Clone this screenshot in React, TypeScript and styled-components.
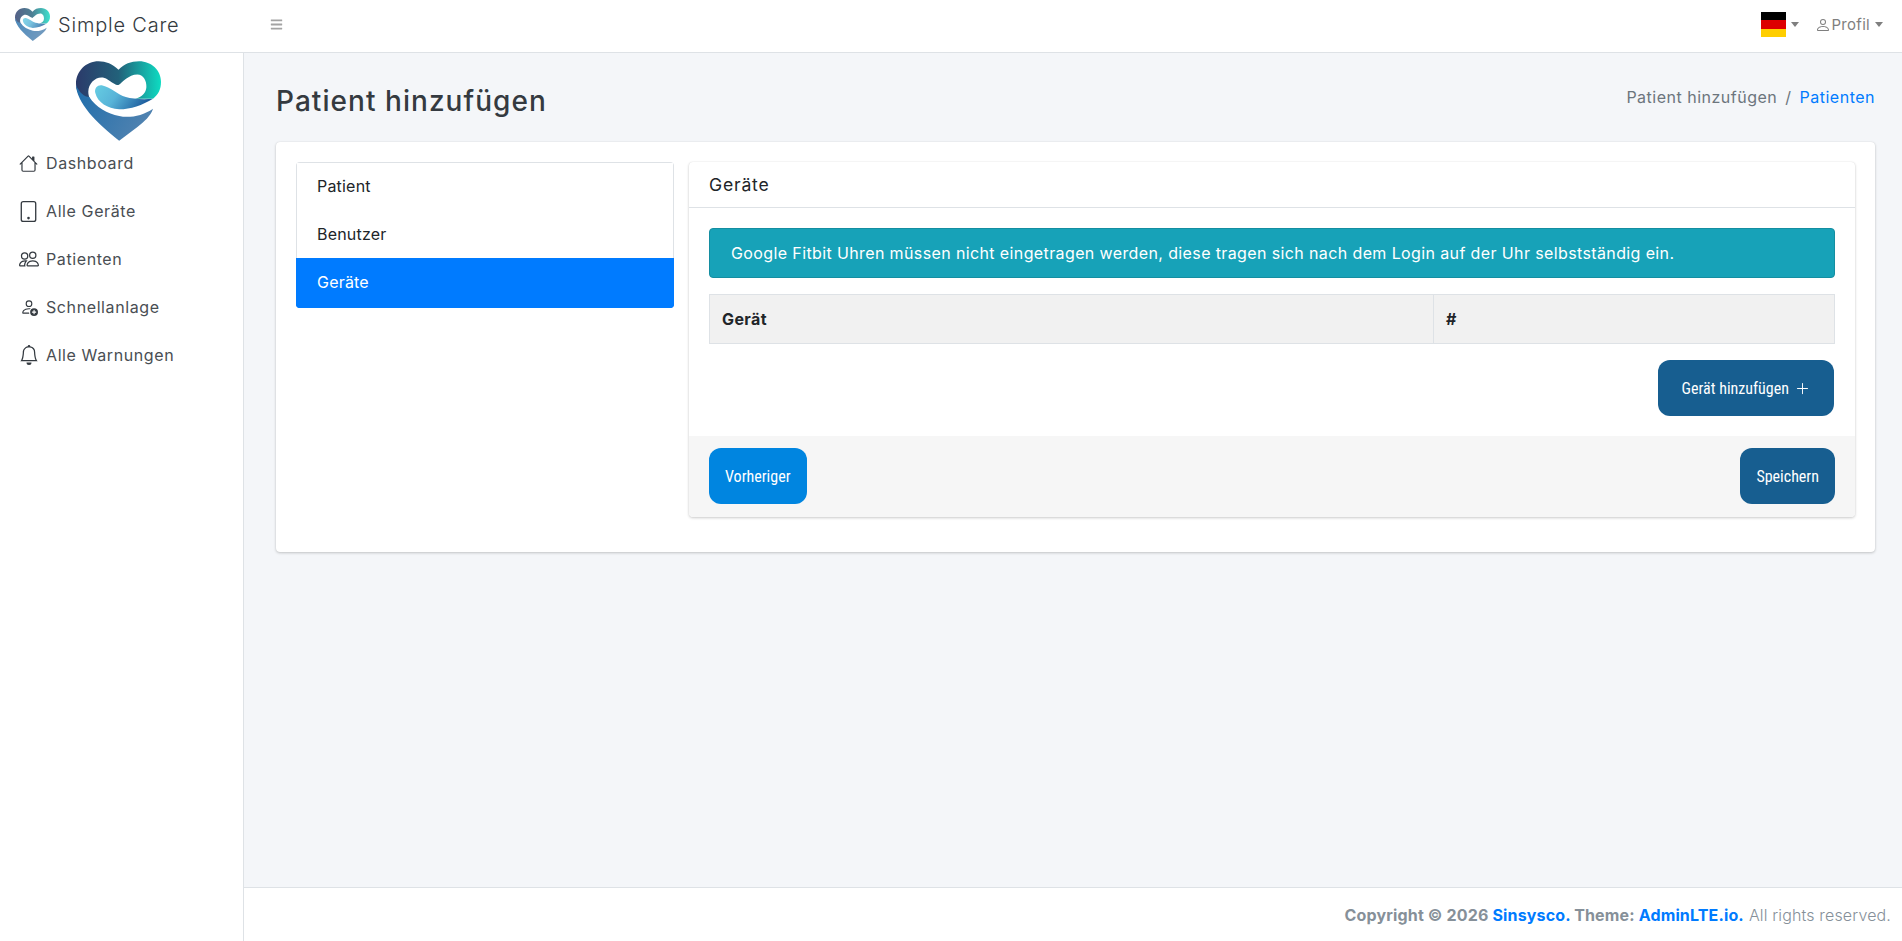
import React from "react";
import styled, { createGlobalStyle } from "styled-components";
import { BsBell, BsHouse, BsPeople, BsPerson, BsPersonAdd, BsPlusLg, BsTablet } from "react-icons/bs";
import { FaBars } from "react-icons/fa";

const GlobalStyle = createGlobalStyle`
  html, body {
    margin: 0;
    padding: 0;
    background: #fff;
    font-family: Inter, "Open Sans", sans-serif;
    font-size: 15px;
    color: #212529;
  }
  * { box-sizing: border-box; }
`;

const S = {
  Page: styled.div`
    display: grid;
    grid-template-columns: 244px 1fr;
    grid-template-rows: 53px 1fr 54px;
    height: 941px;
    overflow: hidden;
  `,
  Navbar: styled.header`
    grid-column: 1 / 3;
    display: flex;
    align-items: center;
    background: #fff;
    border-bottom: 1px solid #dee2e6;
    padding: 0 19px 3px 0;
  `,
  Brand: styled.div`
    display: flex;
    align-items: center;
    gap: 8px;
    width: 270px;
    padding-left: 15px;
    font-size: 20px;
    font-weight: 300;
    color: #343a40;
    letter-spacing: 0.8px;
  `,
  Burger: styled.span`
    display: flex;
    font-size: 13px;
    color: #a3a3a3;
  `,
  NavRight: styled.div`
    display: flex;
    align-items: center;
    margin-left: auto;
    color: #7f7f7f;
    font-size: 15px;
  `,
  Caret: styled.span`
    display: inline-block;
    margin-left: 5px;
    border-top: 5px solid #7f7f7f;
    border-left: 4px solid transparent;
    border-right: 4px solid transparent;
  `,
  Flag: styled.span`
    display: block;
    width: 25px;
    height: 25px;
    background: linear-gradient(#000 33.3%, #dd0000 33.3% 66.6%, #ffce00 66.6%);
  `,
  Profile: styled.div`
    display: flex;
    align-items: center;
    margin-left: 16px;
    letter-spacing: 0.3px;
    svg { font-size: 16px; }
  `,
  Sidebar: styled.aside`
    grid-row: 2 / 4;
    background: #fff;
    border-right: 1px solid #dee2e6;
    padding-top: 8px;
  `,
  SideLogo: styled.div`
    display: flex;
    justify-content: center;
    height: 78px;
    padding-right: 6px;
  `,
  SideMenu: styled.nav`
    display: flex;
    flex-direction: column;
  `,
  SideItem: styled.a`
    display: flex;
    align-items: center;
    height: 48px;
    padding-left: 20px;
    font-size: 16px;
    color: #494e53;
    letter-spacing: 0.6px;
  `,
  SideIcon: styled.span<{ $size: number }>`
    display: flex;
    justify-content: center;
    width: 17px;
    margin-right: 9px;
    color: #343a40;
    svg {
      width: ${p => p.$size}px;
      height: ${p => p.$size}px;
      flex: none;
    }
  `,
  Main: styled.main`
    background: #f4f6f9;
    padding: 0 27px 0 32px;
  `,
  ContentHeader: styled.div`
    display: flex;
    align-items: center;
    justify-content: space-between;
    height: 89px;
  `,
  Title: styled.h1`
    margin: 8px 0 0;
    font-size: 28px;
    font-weight: 500;
    line-height: 1.2;
    color: #343a40;
    letter-spacing: 1.05px;
  `,
  Crumbs: styled.div`
    display: flex;
    align-items: center;
    font-size: 16px;
    color: #6c757d;
    letter-spacing: 0.5px;
    margin-bottom: 2px;
  `,
  CrumbSep: styled.span`
    padding: 0 8px;
  `,
  CrumbLink: styled.a`
    color: #007bff;
  `,
  Card: styled.section`
    display: grid;
    grid-template-columns: 378px 1fr;
    gap: 15px;
    align-items: start;
    background: #fff;
    border-radius: 4px;
    padding: 20px;
    height: 410px;
    box-shadow: 0 0 1px rgba(0, 0, 0, 0.125), 0 1px 3px rgba(0, 0, 0, 0.2);
  `,
  List: styled.div`
    display: flex;
    flex-direction: column;
    border-radius: 4px;
    overflow: hidden;
  `,
  ListItem: styled.a<{ $active?: boolean }>`
    display: flex;
    align-items: center;
    height: ${p => (p.$active ? "50px" : "48px")};
    padding: 0 0 1px 20px;
    font-size: 16px;
    letter-spacing: 0.2px;
    color: ${p => (p.$active ? "#fff" : "#212529")};
    background: ${p => (p.$active ? "#007bff" : "#fff")};
    border: 1px solid ${p => (p.$active ? "#007bff" : "#dee2e6")};
    border-bottom-width: ${p => (p.$active ? "1px" : "0")};
    border-top-width: ${p => (p.$active ? "0" : "1px")};
    & + & { border-top-width: 0; }
  `,
  Panel: styled.div`
    display: flex;
    flex-direction: column;
    border-radius: 4px;
    overflow: hidden;
    box-shadow: 0 0 1px rgba(0, 0, 0, 0.125), 0 1px 3px rgba(0, 0, 0, 0.2);
  `,
  PanelHead: styled.div`
    display: flex;
    align-items: center;
    height: 46px;
    padding-left: 20px;
    font-size: 17.6px;
    color: #212529;
    border-bottom: 1px solid #dee2e6;
    letter-spacing: 0.8px;
  `,
  PanelBody: styled.div`
    display: flex;
    flex-direction: column;
    padding: 20px;
  `,
  Alert: styled.div`
    display: flex;
    align-items: center;
    height: 50px;
    padding-left: 21px;
    margin-bottom: 16px;
    background: #17a2b8;
    border: 1px solid #148ea1;
    border-radius: 4px;
    color: #fff;
    font-size: 16px;
    letter-spacing: 0.38px;
  `,
  Table: styled.table`
    width: 100%;
    border-collapse: collapse;
    table-layout: fixed;
    margin-bottom: 16px;
  `,
  Th: styled.th<{ $width?: string }>`
    width: ${p => p.$width || "auto"};
    height: 49px;
    padding: 0 12px;
    text-align: left;
    font-size: 16px;
    font-weight: 700;
    letter-spacing: 0.4px;
    background: #f1f1f1;
    border: 1px solid #dee2e6;
  `,
  AddRow: styled.div`
    display: flex;
    justify-content: flex-end;
    padding-right: 1px;
  `,
  Button: styled.button<{ $tone: "primary" | "dark"; $wide?: boolean }>`
    display: inline-flex;
    align-items: center;
    gap: 6px;
    height: 56px;
    padding: 0 ${p => (p.$wide ? "24px" : "16px")};
    border: 0;
    border-radius: 12px;
    font-family: Roboto, "Liberation Sans", sans-serif;
    font-stretch: 75%;
    font-size: 16px;
    font-weight: 400;
    color: #fff;
    background: ${p => (p.$tone === "primary" ? "#0085e0" : "#175e90")};
    svg { font-size: 15px; }
  `,
  PanelFoot: styled.div`
    display: flex;
    justify-content: space-between;
    height: 81px;
    padding: 12px 20px;
    background: #f6f6f6;
  `,
  Footer: styled.footer`
    grid-column: 2;
    display: flex;
    align-items: center;
    justify-content: flex-end;
    padding-right: 11px;
    background: #fff;
    border-top: 1px solid #dee2e6;
    font-size: 16px;
    letter-spacing: 0.15px;
    color: #869099;
    font-weight: 300;
  `,
  Strong: styled.strong`
    font-weight: 700;
    margin-right: 5px;
  `,
  FootLink: styled.a`
    color: #007bff;
  `,
  Logo: styled.svg<{ $faded?: boolean }>`
    display: block;
    flex: none;
    opacity: ${p => (p.$faded ? 0.8 : 1)};
  `,
};

const LogoMark: React.FC<{ id: string; width: number; height: number; faded?: boolean }> = ({ id, width, height, faded }) => (
  <S.Logo width={width} height={height} viewBox="0 0 256 240" $faded={faded}>
    <defs>
      <linearGradient id={`${id}-top`} x1="0" y1="0" x2="1" y2="0">
        <stop offset="0" stopColor="#2b3a6a" />
        <stop offset="0.5" stopColor="#22617a" />
        <stop offset="1" stopColor="#0edcc2" />
      </linearGradient>
      <linearGradient id={`${id}-low`} x1="0" y1="0" x2="1" y2="0.4">
        <stop offset="0" stopColor="#1f6dab" />
        <stop offset="1" stopColor="#4f82b0" />
      </linearGradient>
      <linearGradient id={`${id}-swirl`} x1="0" y1="0" x2="1" y2="0.3">
        <stop offset="0" stopColor="#66cde3" />
        <stop offset="0.45" stopColor="#58b4d8" />
        <stop offset="1" stopColor="#1f5f9f" />
      </linearGradient>
    </defs>
    <path d="M128 26C110 8 90 0 68 0C30 0 0 30 0 68C0 85 8 105 25 125L60 140L200 118L232 113C248 100 256 85 256 62C256 28 228 0 190 0C165 0 145 8 128 26Z" fill={`url(#${id}-top)`} />
    <path d="M37 92C38 60 70 38 95 55C108 63 118 72 128 72C140 64 158 40 185 40C202 40 213 58 212 78C211 95 200 108 178 113L232 113L240 140C200 165 160 170 130 165C80 155 37 130 37 92Z" fill="#fff" />
    <path d="M58 95C55 80 66 70 80 73C105 79 125 100 150 108C170 114 205 116 232 113C200 132 165 145 130 145C95 142 65 125 58 95Z" fill={`url(#${id}-swirl)`} />
    <path d="M0 72C2 125 60 185 130 240L185 198C205 182 225 165 232 143C200 165 160 172 130 165C95 158 60 140 40 108C25 108 10 95 0 72Z" fill={`url(#${id}-low)`} />
  </S.Logo>
);

const menu = [
  { icon: <BsHouse />, size: 19, label: "Dashboard" },
  { icon: <BsTablet />, size: 21, label: "Alle Geräte" },
  { icon: <BsPeople />, size: 20, label: "Patienten" },
  { icon: <BsPersonAdd />, size: 18, label: "Schnellanlage" },
  { icon: <BsBell />, size: 20, label: "Alle Warnungen" },
];

const App: React.FC = () => (
  <S.Page>
    <GlobalStyle />
    <S.Navbar>
      <S.Brand>
        <LogoMark id="brand" width={35} height={33} faded />
        Simple Care
      </S.Brand>
      <S.Burger><FaBars /></S.Burger>
      <S.NavRight>
        <S.Flag />
        <S.Caret />
        <S.Profile>
          <BsPerson />
          Profil
          <S.Caret />
        </S.Profile>
      </S.NavRight>
    </S.Navbar>

    <S.Sidebar>
      <S.SideLogo>
        <LogoMark id="side" width={85} height={80} />
      </S.SideLogo>
      <S.SideMenu>
        {menu.map(item => (
          <S.SideItem key={item.label}>
            <S.SideIcon $size={item.size}>{item.icon}</S.SideIcon>
            {item.label}
          </S.SideItem>
        ))}
      </S.SideMenu>
    </S.Sidebar>

    <S.Main>
      <S.ContentHeader>
        <S.Title>Patient hinzufügen</S.Title>
        <S.Crumbs>
          Patient hinzufügen
          <S.CrumbSep>/</S.CrumbSep>
          <S.CrumbLink>Patienten</S.CrumbLink>
        </S.Crumbs>
      </S.ContentHeader>
      <S.Card>
        <S.List>
          <S.ListItem>Patient</S.ListItem>
          <S.ListItem>Benutzer</S.ListItem>
          <S.ListItem $active>Geräte</S.ListItem>
        </S.List>
        <S.Panel>
          <S.PanelHead>Geräte</S.PanelHead>
          <S.PanelBody>
            <S.Alert>Google Fitbit Uhren müssen nicht eingetragen werden, diese tragen sich nach dem Login auf der Uhr selbstständig ein.</S.Alert>
            <S.Table>
              <thead>
                <tr>
                  <S.Th $width="724px">Gerät</S.Th>
                  <S.Th>#</S.Th>
                </tr>
              </thead>
            </S.Table>
            <S.AddRow>
              <S.Button $tone="dark" $wide>
                Gerät hinzufügen
                <BsPlusLg />
              </S.Button>
            </S.AddRow>
          </S.PanelBody>
          <S.PanelFoot>
            <S.Button $tone="primary">Vorheriger</S.Button>
            <S.Button $tone="dark">Speichern</S.Button>
          </S.PanelFoot>
        </S.Panel>
      </S.Card>
    </S.Main>

    <S.Footer>
      <S.Strong>
        Copyright © 2026 <S.FootLink>Sinsysco.</S.FootLink> Theme: <S.FootLink>AdminLTE.io.</S.FootLink>
      </S.Strong>
      All rights reserved.
    </S.Footer>
  </S.Page>
);

export default App;
